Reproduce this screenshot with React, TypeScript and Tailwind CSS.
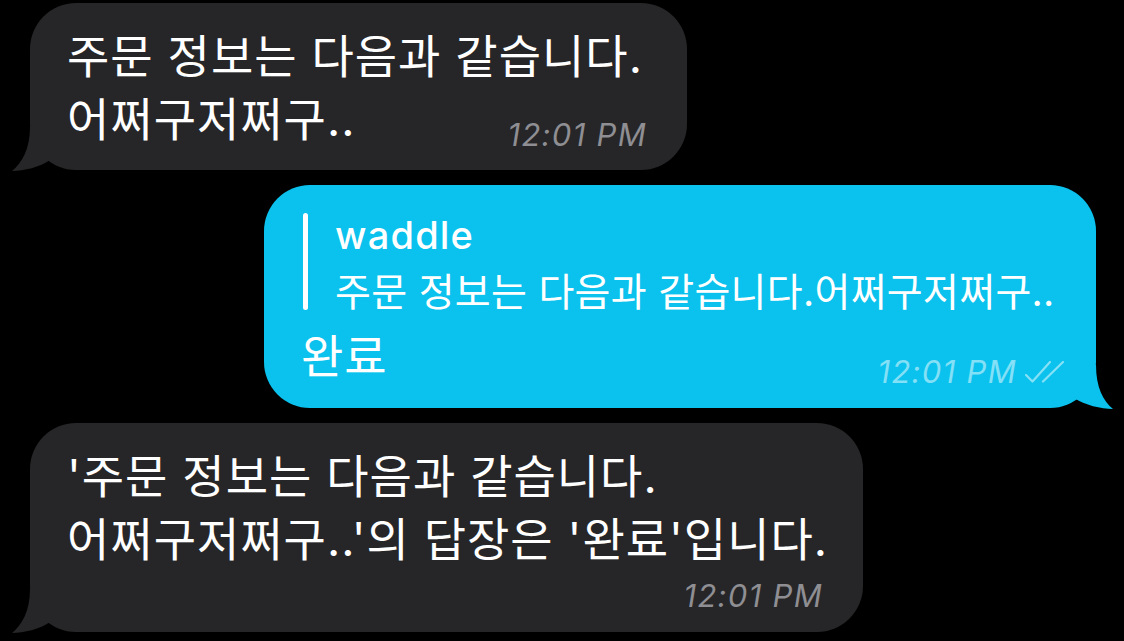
import React from "react";

const KR = "font-['Inter','Noto_Sans_CJK_KR',sans-serif]";

function TailLeft({ color }: { color: string }) {
  return (
    <svg
      className="absolute left-[-18px] bottom-[-1px]"
      width="60"
      height="50"
      viewBox="0 0 60 50"
    >
      <path d="M18 6 C18 28 10 42 0 50 C12 50 28 46 38 39 L38 6 Z" fill={color} />
    </svg>
  );
}

function TailRight({ color }: { color: string }) {
  return (
    <svg
      className="absolute right-[-17px] bottom-[-1px] -scale-x-100"
      width="60"
      height="50"
      viewBox="0 0 60 50"
    >
      <path d="M17 6 C17 28 10 42 0 50 C12 50 28 46 39 39 L39 6 Z" fill={color} />
    </svg>
  );
}

function Time({ className }: { className: string }) {
  return (
    <span
      className={`font-['Inter',sans-serif] italic text-[31px] leading-[22px] tracking-[1.3px] whitespace-nowrap ${className}`}
    >
      12:01 PM
    </span>
  );
}

export default function App() {
  return (
    <div className="w-full h-[641px] bg-black flex flex-col pt-[3px] gap-[15px] overflow-hidden">
      {/* Bubble 1 */}
      <div className="relative ml-[30px] w-[657px] bg-[#262628] rounded-[46px] pt-[22px] pb-[19px] pl-[37px] pr-[40px] flex flex-col">
        <TailLeft color="#262628" />
        <div className={`${KR} text-white text-[46px] leading-[63px] tracking-[1px] whitespace-nowrap`}>
          주문 정보는 다음과 같습니다.
        </div>
        <div className="flex items-end justify-between">
          <div className={`${KR} text-white text-[46px] leading-[63px] tracking-[1px] whitespace-nowrap`}>
            어쩌구저쩌구..
          </div>
          <Time className="text-[#8e8e93] mb-[5px]" />
        </div>
      </div>

      {/* Bubble 2 */}
      <div className="relative self-end mr-[28px] w-[832px] bg-[#0ac2ed] rounded-[46px] pt-[28px] pb-[20px] pl-[38px] pr-[29px] flex flex-col">
        <TailRight color="#0ac2ed" />
        <div className="flex items-start">
          <div className="ml-[1px] w-[5px] h-[97px] rounded-full bg-white shrink-0" />
          <div className="ml-[27px] flex flex-col text-white">
            <div className="font-['Inter',sans-serif] font-medium text-[38px] leading-[44px] tracking-[1.2px]">waddle</div>
            <div className={`${KR} mt-[9px] text-[39px] leading-[52px] tracking-[0.3px] whitespace-nowrap`}>
              주문 정보는 다음과 같습니다.어쩌구저쩌구..
            </div>
          </div>
        </div>
        <div className="mt-[7px] flex items-end justify-between">
          <div className={`${KR} ml-[-1px] text-white text-[46px] leading-[63px] tracking-[1px]`}>완료</div>
          <div className="flex items-end gap-[8px] mb-[5px] text-white/50">
            <Time className="" />
            <svg width="42" height="22" viewBox="0 0 42 22" fill="none" stroke="currentColor" strokeWidth="2.2" strokeLinecap="round" strokeLinejoin="round">
              <path d="M1 14 L7.5 20.5 L25 1" />
              <path d="M18 20.5 L38 1" />
            </svg>
          </div>
        </div>
      </div>

      {/* Bubble 3 */}
      <div className="relative ml-[30px] w-[833px] bg-[#262628] rounded-[46px] pt-[22px] pb-[25px] pl-[37px] pr-[40px] flex flex-col">
        <TailLeft color="#262628" />
        <div className={`${KR} text-white text-[46px] leading-[63px] tracking-[1px] whitespace-nowrap`}>
          <div>'주문 정보는 다음과 같습니다.</div>
          <div>어쩌구저쩌구..'의 답장은 '완료'입니다.</div>
        </div>
        <div className="mt-[14px] flex justify-end">
          <Time className="text-[#8e8e93]" />
        </div>
      </div>
    </div>
  );
}
